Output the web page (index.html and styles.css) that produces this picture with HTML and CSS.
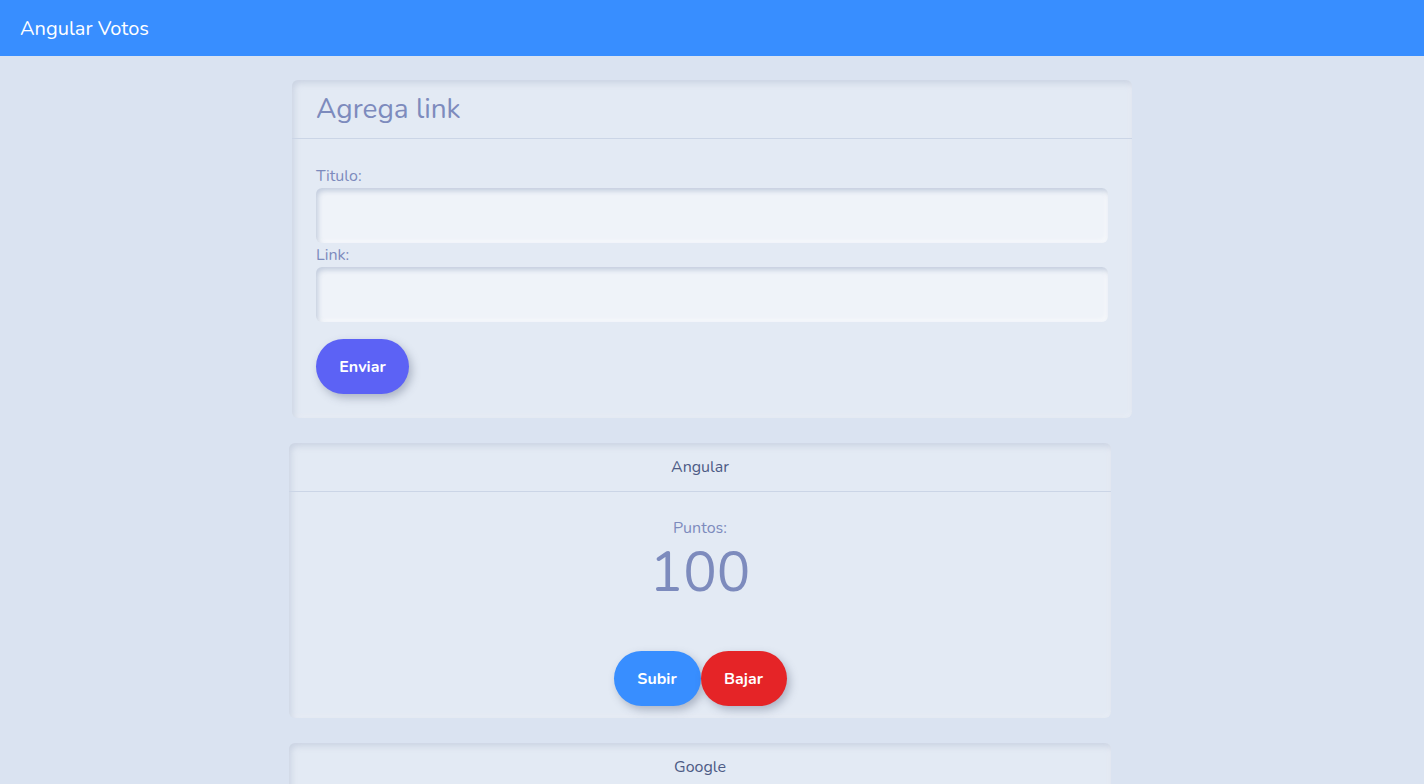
FILE: index.html
```html
<!DOCTYPE html>
<html lang="es">
<head>
<meta charset="utf-8">
<title>Angular Votos</title>
<link rel="stylesheet" href="styles.css">
</head>
<body>
<nav class="navbar"><span class="brand">Angular Votos</span></nav>
<main class="container">
  <section class="card form-card">
    <header class="form-header">Agrega link</header>
    <div class="form-body">
      <label class="label" for="titulo">Titulo:</label>
      <input class="input" id="titulo" type="text">
      <label class="label" for="link">Link:</label>
      <input class="input" id="link" type="text">
      <button class="btn btn-purple">Enviar</button>
    </div>
  </section>
  <section class="card vote-card">
    <header class="vote-header">Angular</header>
    <div class="vote-body">
      <div class="puntos-label">Puntos:</div>
      <div class="puntos">100</div>
      <div class="actions">
        <button class="btn btn-blue">Subir</button>
        <button class="btn btn-red">Bajar</button>
      </div>
    </div>
  </section>
  <section class="card vote-card">
    <header class="vote-header">Google</header>
    <div class="vote-body">
      <div class="puntos-label">Puntos:</div>
      <div class="puntos">50</div>
    </div>
  </section>
</main>
</body>
</html>
```
FILE: styles.css
```css
* { box-sizing: border-box; }
html, body { margin: 0; padding: 0; }
body {
  background: #dae3f1;
  font-family: "Nunito", "Lato", "Open Sans", sans-serif;
  color: #7d8bbd;
  height: 784px;
  overflow: hidden;
}
.navbar {
  height: 56px;
  background: #388eff;
  display: flex;
  align-items: center;
  padding: 0 20px;
}
.brand {
  color: #fff;
  font-size: 20px;
}
.container {
  width: 840px;
  margin: 24px auto 0;
  display: flex;
  flex-direction: column;
  gap: 25px;
}
.card {
  background: #e3eaf4;
  border-radius: 6px;
  box-shadow: inset 2px 3px 6px rgba(170, 182, 205, 0.45), inset -2px -2px 4px rgba(255,255,255,0.3);
}
.form-header {
  height: 59px;
  padding: 0 24px;
  display: flex;
  align-items: center;
  font-size: 28px;
  color: #7d8bbd;
  border-bottom: 1px solid #cbd5e6;
}
.form-body {
  padding: 25px 24px 24px;
  display: flex;
  flex-direction: column;
  align-items: flex-start;
}
.label {
  font-size: 16px;
  line-height: 24px;
  color: #7d8bbd;
}
.input {
  width: 100%;
  height: 55px;
  border: none;
  border-radius: 6px;
  background: #eff3f9;
  box-shadow: inset 2px 3px 5px rgba(160, 175, 200, 0.55), inset -2px -2px 4px rgba(255,255,255,0.6);
  outline: none;
  font-family: inherit;
  font-size: 16px;
  padding: 0 12px;
}
.btn {
  height: 55px;
  border: none;
  border-radius: 28px;
  padding: 0;
  color: #fff;
  font-family: inherit;
  font-weight: 700;
  font-size: 16px;
  box-shadow: 3px 4px 8px rgba(70, 80, 110, 0.35);
  cursor: pointer;
}
.btn-purple { background: #5c62f5; margin-top: 17px; width: 93px; }
.btn-blue { background: #388eff; width: 87px; }
.btn-red { background: #e52427; width: 86px; }
.vote-card {
  width: 822px;
  margin-left: -3px;
}
.vote-header {
  height: 49px;
  display: flex;
  align-items: center;
  justify-content: center;
  font-size: 16px;
  color: #4d5b85;
  border-bottom: 1px solid #cbd5e6;
}
.vote-body {
  padding: 24px 0 12px;
  display: flex;
  flex-direction: column;
  align-items: center;
}
.puntos-label {
  font-size: 16px;
  line-height: 24px;
}
.puntos {
  font-size: 56px;
  line-height: 66px;
  color: #7d8bbd;
}
.actions {
  margin-top: 45px;
  display: flex;
  gap: 0;
}
```
